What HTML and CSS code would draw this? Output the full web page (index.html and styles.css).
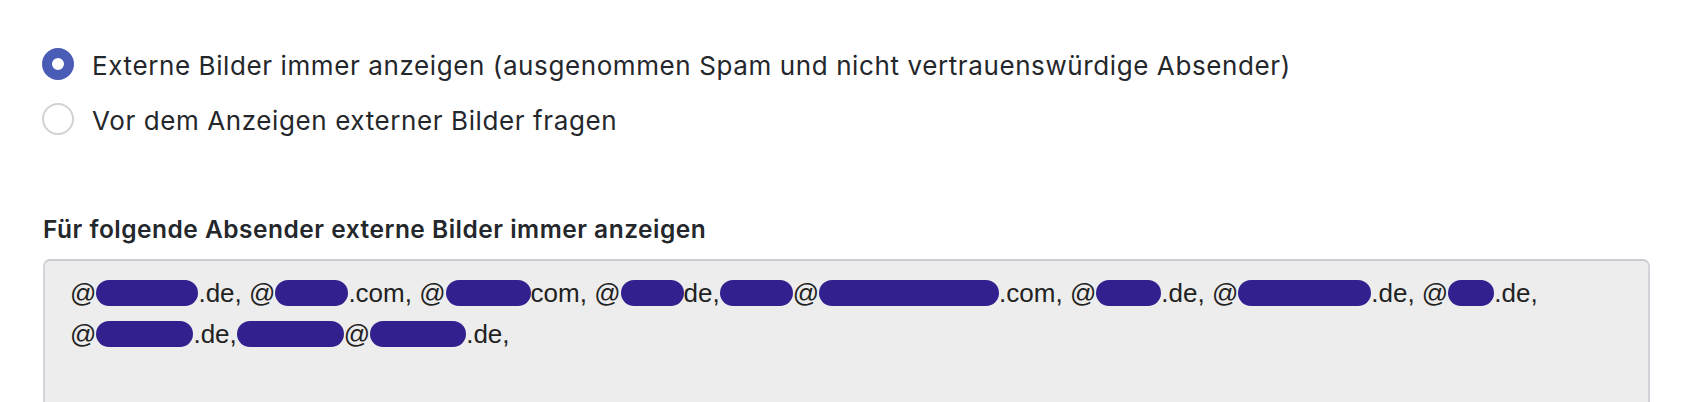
FILE: index.html
```html
<!DOCTYPE html>
<html lang="de">
<head>
    <meta charset="UTF-8">
    <meta name="viewport" content="width=device-width, initial-scale=1.0">
    <title>Externe Bilder</title>
    <link rel="stylesheet" href="styles.css">
</head>
<body>

<div class="settings">
    <div class="options">
        <div class="option">
            <span class="radio checked"></span>
            <span class="option-text">Externe Bilder immer anzeigen (ausgenommen Spam und nicht vertrauenswürdige Absender)</span>
        </div>
        <div class="option">
            <span class="radio"></span>
            <span class="option-text">Vor dem Anzeigen externer Bilder fragen</span>
        </div>
    </div>

    <div class="field-label">Für folgende Absender externe Bilder immer anzeigen</div>

    <div class="sender-box">
        <!-- redacted sender addresses -->
        @<span class="redact r102"></span>.de, @<span class="redact r73"></span>.com, @<span class="redact r85"></span>com, @<span class="redact r63"></span>de,<span class="redact r73"></span>@<span class="redact r180"></span>.com, @<span class="redact r65"></span>.de, @<span class="redact r133"></span>.de, @<span class="redact r46"></span>.de,<br>
        @<span class="redact r97"></span>.de,<span class="redact r107"></span>@<span class="redact r96"></span>.de,
    </div>
</div>

</body>
</html>
```

FILE: styles.css
```css
body {
    margin: 0;
    padding: 0;
    background-color: #ffffff;
    color: #24272b;
    font-family: Inter, "Noto Sans", sans-serif;
}
.settings {
    padding: 36px 0 0 43px;
    width: 1607px;
}
.options {
    display: flex;
    flex-direction: column;
}
.option {
    display: flex;
    align-items: center;
    gap: 18px;
    height: 55px;
}
.radio {
    box-sizing: border-box;
    width: 32px;
    height: 32px;
    margin-left: -1px;
    border-radius: 50%;
    border: 2px solid #d2d2ce;
    background-color: #ffffff;
    flex-shrink: 0;
}
.radio.checked {
    border: 10px solid #4a5db6;
}
.option-text {
    padding-top: 4px;
    font-size: 26px;
    letter-spacing: 0.6px;
}
.field-label {
    margin-top: 68px;
    font-size: 24.5px;
    line-height: 30px;
    font-weight: 600;
    letter-spacing: 0.5px;
}
.sender-box {
    margin-top: 15px;
    height: 200px;
    padding: 12px 25px;
    border: 2px solid #d1d5d9;
    border-top-color: #c8ccd0;
    border-radius: 7px;
    background-color: #ededed;
    font-family: "Liberation Sans", Arial, sans-serif;
    font-size: 26px;
    line-height: 41px;
    color: #222222;
}
.redact {
    display: inline-block;
    height: 26px;
    vertical-align: -4px;
    border-radius: 13px;
    background-color: #33208f;
}
.r46 { width: 46px; }
.r63 { width: 63px; }
.r65 { width: 65px; }
.r73 { width: 73px; }
.r85 { width: 85px; }
.r96 { width: 96px; }
.r97 { width: 97px; }
.r102 { width: 102px; }
.r107 { width: 107px; }
.r133 { width: 133px; }
.r180 { width: 180px; }
```
